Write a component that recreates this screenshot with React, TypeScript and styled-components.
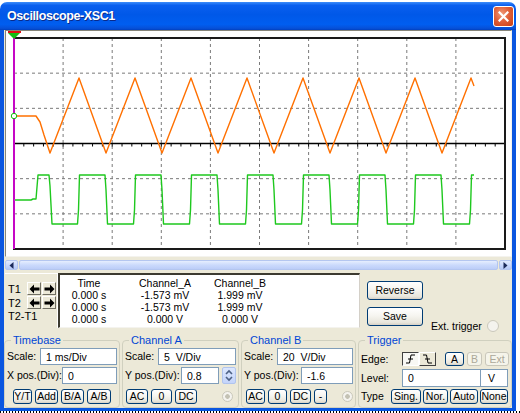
import React from 'react';
import styled, { createGlobalStyle } from 'styled-components';

const GlobalStyle = createGlobalStyle`
  html, body {
    margin: 0;
    padding: 0;
    background: #fff;
  }
  body {
    font-family: "Liberation Sans", Arial, sans-serif;
    font-size: 10.5px;
    color: #000;
  }
`;

const FONT = `"Liberation Sans", Arial, sans-serif`;

// plot area in page pixels
const PLOT = { x: 14, y: 38, w: 491, h: 211 };

const Window = styled.div`
  width: 516px;
  margin-top: 2px;
  display: flex;
  flex-direction: column;
`;

const TitleBar = styled.div`
  height: 28px;
  box-sizing: border-box;
  padding: 0 2px 0 7px;
  border-radius: 7px 7px 0 0;
  display: flex;
  align-items: center;
  justify-content: space-between;
  background: linear-gradient(180deg, #3d8dfa 0%, #0a5fef 12%, #0058e8 45%, #005ef0 80%, #0650d8 94%, #0040c0 100%);
`;

const TitleText = styled.span`
  color: #fff;
  font-family: ${FONT};
  font-weight: bold;
  font-size: 12.5px;
  letter-spacing: -0.4px;
  text-shadow: 1px 1px 0 #0a2a8a;
`;

const CloseButton = styled.div`
  width: 21px;
  height: 21px;
  box-sizing: border-box;
  border: 1px solid #fff;
  border-radius: 3px;
  display: flex;
  align-items: center;
  justify-content: center;
  background: radial-gradient(circle at 40% 35%, #f09a78 0%, #e0603a 45%, #c93d12 100%);
`;

const Client = styled.div`
  background: #ece9d8;
  border-left: 4px solid #0a56e0;
  border-right: 4px solid #0a56e0;
  border-bottom: 3px solid #0a56e0;
  display: flex;
  flex-direction: column;
`;

const DottedEdge = styled.div`
  height: 2px;
  width: 520px;
  background: repeating-linear-gradient(90deg, #000 0 1px, #fff 1px 3px);
`;

const Screen = styled.div`
  margin-left: 1px;
  width: 507px;
  height: 227px;
  box-sizing: border-box;
  border: 1px solid #86857a;
  border-right-color: #f4f3ee;
  border-bottom-color: #f4f3ee;
  background: #fff;
`;

const Canvas = styled.svg`
  display: block;
`;

const ScrollBar = styled.div`
  margin: 3px 0 0 1px;
  width: 507px;
  height: 10px;
  display: flex;
`;

const ScrollArrow = styled.div`
  width: 13px;
  box-sizing: border-box;
  border: 1px solid #b4c6f0;
  border-radius: 2px;
  background: linear-gradient(180deg, #e2ebfe 0%, #c6d6fc 60%, #b6c9f6 100%);
  display: flex;
  align-items: center;
  justify-content: center;
`;

const ScrollThumb = styled.div`
  flex: 1;
  margin: 0 1px;
  box-sizing: border-box;
  border: 1px solid #b4c6f0;
  border-radius: 2px;
  background: linear-gradient(180deg, #e6eefe 0%, #cbdafc 50%, #bccdf8 100%);
`;

const MiddleRow = styled.div`
  margin-top: 3px;
  height: 56px;
  display: flex;
  align-items: flex-start;
`;

const CursorPanel = styled.div`
  margin-left: 1px;
  width: 53px;
  height: 55px;
  box-sizing: border-box;
  border-top: 1px solid #fff;
  border-right: 1px solid #fff;
  padding: 8px 0 0 3px;
  display: grid;
  grid-template-columns: 19px auto;
  grid-template-rows: 13px 13px 12px;
  row-gap: 1px;
  align-items: center;
`;

const CursorLabel = styled.span`
  font-size: 11px;
  line-height: 12px;
`;

const WideLabel = styled(CursorLabel)`
  grid-column: 1 / span 2;
`;

const ArrowPair = styled.div`
  display: flex;
  gap: 1px;
`;

const ArrowButton = styled.div`
  width: 14px;
  height: 13px;
  box-sizing: border-box;
  border: 1px solid;
  border-color: #fff #716f64 #716f64 #fff;
  background: #ece9d8;
  display: flex;
  align-items: center;
  justify-content: center;
`;

const Readout = styled.div`
  width: 302px;
  height: 55px;
  box-sizing: border-box;
  background: #fff;
  border-top: 2px solid #3c3a30;
  border-left: 2px solid #3c3a30;
  border-right: 1px solid #d4d0c8;
  border-bottom: 1px solid #f4f3ee;
  padding-top: 2px;
  display: grid;
  grid-template-columns: 58px 94px 56px;
  grid-auto-rows: 12px;
  justify-items: center;
`;

const ReadoutCell = styled.span`
  font-size: 10.5px;
  line-height: 12px;
  white-space: nowrap;
`;

const ButtonColumn = styled.div`
  margin-left: 7px;
  padding-top: 8px;
  display: flex;
  flex-direction: column;
  gap: 7px;
`;

const XpButton = styled.button<{ $w: number; $h: number; $off?: boolean }>`
  width: ${({ $w }) => $w}px;
  height: ${({ $h }) => $h}px;
  box-sizing: border-box;
  padding: 0;
  border: 1px solid ${({ $off }) => ($off ? '#c9c7ba' : '#003c74')};
  border-radius: 3px;
  background: ${({ $off }) =>
    $off ? '#f5f4ea' : 'linear-gradient(180deg, #ffffff 0%, #f6f5f0 45%, #e8e6dc 85%, #d6d0c5 100%)'};
  color: ${({ $off }) => ($off ? '#aca899' : '#000')};
  font-family: ${FONT};
  font-size: 10.5px;
  line-height: 1;
  white-space: nowrap;
  display: flex;
  align-items: center;
  justify-content: center;
`;

const ExtTrigger = styled.div`
  margin: 0 0 -3px 8px;
  align-self: flex-end;
  display: flex;
  align-items: center;
  gap: 5px;
  font-size: 10.5px;
`;

const Radio = styled.span<{ $size: number; $dot?: boolean }>`
  width: ${({ $size }) => $size}px;
  height: ${({ $size }) => $size}px;
  box-sizing: border-box;
  border-radius: 50%;
  border: 1px solid #cac8bb;
  background: ${({ $dot }) =>
    $dot ? 'radial-gradient(circle, #c4c2b4 0 2px, #f4f3ee 2.6px)' : '#f4f3ee'};
  flex: none;
`;

const GroupsRow = styled.div`
  margin-top: 5px;
  display: flex;
  gap: 2px;
`;

const Group = styled.fieldset<{ $w: number }>`
  margin: 0;
  width: ${({ $w }) => $w}px;
  height: 74px;
  min-width: 0;
  box-sizing: border-box;
  padding: 1px 2px 2px 2px;
  border: 1px solid #d0d0bf;
  border-radius: 4px;
`;

const GroupTitle = styled.legend`
  margin-left: 4px;
  padding: 0 2px;
  color: #0046d5;
  font-size: 11px;
  line-height: 13px;
`;

const Row = styled.div<{ $top?: number; $h?: number; $pad?: number; $align?: string }>`
  margin-top: ${({ $top }) => $top ?? 0}px;
  height: ${({ $h }) => $h ?? 17}px;
  padding-left: ${({ $pad }) => $pad ?? 0}px;
  display: flex;
  align-items: ${({ $align }) => $align ?? 'center'};
  justify-content: space-between;
`;

const Cluster = styled.div<{ $gap: number }>`
  display: flex;
  align-items: center;
  gap: ${({ $gap }) => $gap}px;
`;

const Label = styled.span<{ $w?: number }>`
  font-size: 10.5px;
  line-height: 13px;
  white-space: nowrap;
  width: ${({ $w }) => ($w ? `${$w}px` : 'auto')};
  flex: none;
`;

const TextBox = styled.input<{ $w: number; $h?: number }>`
  width: ${({ $w }) => $w}px;
  height: ${({ $h }) => $h ?? 17}px;
  box-sizing: border-box;
  margin: 0;
  padding: 0 0 0 5px;
  border: 1px solid #7f9db9;
  background: #fff;
  font-family: ${FONT};
  font-size: 10.5px;
  color: #000;
  outline: none;
`;

const UnitBox = styled.div`
  width: 27px;
  height: 18px;
  box-sizing: border-box;
  border: 1px solid #7f9db9;
  border-left: none;
  padding-left: 7px;
  background: #fff;
  font-size: 10.5px;
  line-height: 16px;
`;

const Spinner = styled.div`
  width: 14px;
  height: 17px;
  box-sizing: border-box;
  border: 1px solid #b0c4ee;
  border-radius: 2px;
  background: linear-gradient(180deg, #dce7fe 0%, #c4d4fa 100%);
  display: flex;
`;

const EdgeButton = styled.div<{ $pressed?: boolean }>`
  width: 17px;
  height: 14px;
  box-sizing: border-box;
  border: 1px solid;
  border-color: ${({ $pressed }) => ($pressed ? '#404040 #fff #fff #404040' : '#fff #404040 #404040 #fff')};
  background: ${({ $pressed }) => ($pressed ? '#f8f8f4' : '#ece9d8')};
  display: flex;
  align-items: center;
  justify-content: center;
`;

const EdgePair = styled.div`
  display: flex;
  margin-right: 6px;
`;

const readout = [
  ['Time', 'Channel_A', 'Channel_B'],
  ['0.000 s', '-1.573 mV', '1.999 mV'],
  ['0.000 s', '-1.573 mV', '1.999 mV'],
  ['0.000 s', '0.000 V', '0.000 V'],
];

const vLines = Array.from({ length: 9 }, (_, i) => PLOT.x + (PLOT.w / 10) * (i + 1));
const hLines = Array.from({ length: 5 }, (_, i) => PLOT.y + (PLOT.h / 6) * (i + 1));
const axisY = hLines[2];
const ticks = Array.from({ length: 49 }, (_, i) => PLOT.x + (PLOT.w / 50) * (i + 1));

const PERIOD = 56;

// channel A: triangle wave
const triangle = (() => {
  const pts: number[][] = [[14, 116], [36, 116], [40, 122], [44, 135], [50, 153]];
  for (let k = 0; k < 8; k++) {
    pts.push([79 + PERIOD * k, 78]);
    if (k < 7) pts.push([106 + PERIOD * k, 153]);
  }
  pts.push([474, 86]);
  return pts.map((p) => p.join(',')).join(' ');
})();

// channel B: square wave
const square = (() => {
  const pts: number[][] = [[14, 200], [31, 200], [33, 199], [36, 199], [37, 187], [38, 175], [49, 175], [50, 186], [52, 224]];
  for (let k = 0; k < 8; k++) {
    const r = 77.5 + PERIOD * k;
    pts.push([r, 224], [r + 1, 210], [r + 2, 175]);
    if (k < 7) {
      const f = 105 + PERIOD * k;
      pts.push([f, 175], [f + 1, 190], [f + 2.5, 224]);
    }
  }
  pts.push([474, 175]);
  return pts.map((p) => p.join(',')).join(' ');
})();

const ScopeScreen: React.FC = () => (
  <Screen>
    <Canvas width={505} height={225} viewBox="6 31 505 225">
      {vLines.map((x) => (
        <line key={`v${x}`} x1={x} y1={PLOT.y} x2={x} y2={PLOT.y + PLOT.h} stroke="#7a7a7a" strokeDasharray="3 3" />
      ))}
      {hLines.map((y, i) =>
        i === 2 ? null : (
          <line key={`h${y}`} x1={PLOT.x} y1={y} x2={PLOT.x + PLOT.w} y2={y} stroke="#7a7a7a" strokeDasharray="3 3" />
        )
      )}
      <line x1={PLOT.x} y1={axisY} x2={PLOT.x + PLOT.w} y2={axisY} stroke="#000" strokeWidth={1.6} />
      {ticks.map((x) => (
        <line key={`t${x}`} x1={x} y1={axisY} x2={x} y2={axisY + 3} stroke="#000" strokeWidth={1} />
      ))}
      <rect x={PLOT.x} y={PLOT.y} width={PLOT.w} height={PLOT.h} fill="none" stroke="#1a1a1a" strokeWidth={2} />
      <polyline points={triangle} fill="none" stroke="#ff7000" strokeWidth={1.4} strokeLinejoin="round" />
      <polyline points={square} fill="none" stroke="#1ec81e" strokeWidth={1.4} strokeLinejoin="round" />
      <line x1={14} y1={33} x2={14} y2={PLOT.y + PLOT.h} stroke="#ff00ff" strokeWidth={1.5} />
      <rect x={8} y={31} width={13} height={2} fill="#e01010" />
      <polygon points="8,33 20,33 14,39" fill="#10c010" />
      <circle cx={14} cy={116} r={2.7} fill="#fff" stroke="#10c010" strokeWidth={1} />
    </Canvas>
  </Screen>
);

const ArrowIcon: React.FC<{ dir: 'left' | 'right' }> = ({ dir }) => (
  <svg width="11" height="10" viewBox="0 0 11 10">
    <path
      d="M0.5 5 L5 0.5 V3.5 H10.5 V6.5 H5 V9.5 Z"
      fill="#000"
      transform={dir === 'right' ? 'translate(11 0) scale(-1 1)' : undefined}
    />
  </svg>
);

const CursorControls: React.FC = () => (
  <CursorPanel>
    <CursorLabel>T1</CursorLabel>
    <ArrowPair>
      <ArrowButton><ArrowIcon dir="left" /></ArrowButton>
      <ArrowButton><ArrowIcon dir="right" /></ArrowButton>
    </ArrowPair>
    <CursorLabel>T2</CursorLabel>
    <ArrowPair>
      <ArrowButton><ArrowIcon dir="left" /></ArrowButton>
      <ArrowButton><ArrowIcon dir="right" /></ArrowButton>
    </ArrowPair>
    <WideLabel>T2-T1</WideLabel>
  </CursorPanel>
);

const SpinIcon: React.FC = () => (
  <svg width="12" height="15" viewBox="0 0 12 15">
    <path d="M3 6 L6 3 L9 6" fill="none" stroke="#4d6185" strokeWidth={1.6} />
    <path d="M3 9 L6 12 L9 9" fill="none" stroke="#4d6185" strokeWidth={1.6} />
  </svg>
);

const EdgeIcon: React.FC<{ rising: boolean }> = ({ rising }) => (
  <svg width="13" height="10" viewBox="0 0 13 10">
    <path
      d={rising ? 'M2 9 H5.5 L7 1 H11 M4 5 H9' : 'M2 1 H5.5 L7 9 H11 M4 5 H9'}
      fill="none"
      stroke="#000"
      strokeWidth={1}
    />
  </svg>
);

const Timebase: React.FC = () => (
  <Group $w={116}>
    <GroupTitle>Timebase</GroupTitle>
    <Row>
      <Label>Scale:</Label>
      <TextBox $w={77} readOnly value="1 ms/Div" />
    </Row>
    <Row $top={2}>
      <Label>X pos.(Div):</Label>
      <TextBox $w={55} readOnly value="0" />
    </Row>
    <Row $top={5} $h={15} $pad={6}>
      <Cluster $gap={3}>
        <XpButton $w={19} $h={15}>Y/T</XpButton>
        <XpButton $w={23} $h={15}>Add</XpButton>
        <XpButton $w={23} $h={15}>B/A</XpButton>
        <XpButton $w={24} $h={15}>A/B</XpButton>
      </Cluster>
    </Row>
  </Group>
);

const ChannelA: React.FC = () => (
  <Group $w={117}>
    <GroupTitle>Channel A</GroupTitle>
    <Row>
      <Label>Scale:</Label>
      <TextBox $w={78} readOnly value="5  V/Div" />
    </Row>
    <Row $top={2}>
      <Label>Y pos.(Div):</Label>
      <Cluster $gap={3}>
        <TextBox $w={38} readOnly value="0.8" />
        <Spinner><SpinIcon /></Spinner>
      </Cluster>
    </Row>
    <Row $top={5} $h={15} $pad={1}>
      <Cluster $gap={3}>
        <XpButton $w={22} $h={15}>AC</XpButton>
        <XpButton $w={21} $h={15}>0</XpButton>
        <XpButton $w={22} $h={15}>DC</XpButton>
      </Cluster>
      <Cluster $gap={0} style={{ marginRight: 3 }}>
        <Radio $size={11} $dot />
      </Cluster>
    </Row>
  </Group>
);

const ChannelB: React.FC = () => (
  <Group $w={115}>
    <GroupTitle>Channel B</GroupTitle>
    <Row>
      <Label>Scale:</Label>
      <TextBox $w={76} readOnly value="20  V/Div" />
    </Row>
    <Row $top={2}>
      <Label>Y pos.(Div):</Label>
      <TextBox $w={52} readOnly value="-1.6" />
    </Row>
    <Row $top={5} $h={15} $pad={2}>
      <Cluster $gap={3}>
        <XpButton $w={19} $h={15}>AC</XpButton>
        <XpButton $w={19} $h={15}>0</XpButton>
        <XpButton $w={21} $h={15}>DC</XpButton>
        <XpButton $w={13} $h={15}>-</XpButton>
      </Cluster>
      <Radio $size={11} $dot />
    </Row>
  </Group>
);

const Trigger: React.FC = () => (
  <Group $w={154}>
    <GroupTitle>Trigger</GroupTitle>
    <Row $h={18} $align="flex-end">
      <Label $w={41}>Edge:</Label>
      <Cluster $gap={3} style={{ marginRight: 1 }}>
        <EdgePair>
          <EdgeButton $pressed><EdgeIcon rising /></EdgeButton>
          <EdgeButton><EdgeIcon rising={false} /></EdgeButton>
        </EdgePair>
        <XpButton $w={19} $h={14}>A</XpButton>
        <XpButton $w={15} $h={14} $off>B</XpButton>
        <XpButton $w={24} $h={14} $off>Ext</XpButton>
      </Cluster>
    </Row>
    <Row $top={3} $h={18}>
      <Label $w={41}>Level:</Label>
      <Cluster $gap={0} style={{ marginRight: 1 }}>
        <TextBox $w={79} $h={18} readOnly value="0" />
        <UnitBox>V</UnitBox>
      </Cluster>
    </Row>
    <Row $top={2} $h={15}>
      <Label $w={30}>Type</Label>
      <Cluster $gap={2} style={{ marginRight: 1 }}>
        <XpButton $w={30} $h={15}>Sing.</XpButton>
        <XpButton $w={25} $h={15}>Nor.</XpButton>
        <XpButton $w={28} $h={15}>Auto</XpButton>
        <XpButton $w={28} $h={15}>None</XpButton>
      </Cluster>
    </Row>
  </Group>
);

const App: React.FC = () => (
  <>
    <GlobalStyle />
    <Window>
      <TitleBar>
        <TitleText>Oscilloscope-XSC1</TitleText>
        <CloseButton>
          <svg width="11" height="11" viewBox="0 0 11 11">
            <path d="M1.5 1.5 L9.5 9.5 M9.5 1.5 L1.5 9.5" stroke="#fff" strokeWidth={2.2} strokeLinecap="square" />
          </svg>
        </CloseButton>
      </TitleBar>
      <Client>
        <ScopeScreen />
        <ScrollBar>
          <ScrollArrow>
            <svg width="5" height="7" viewBox="0 0 5 7"><polygon points="4.5,0 0.5,3.5 4.5,7" fill="#1c2a5a" /></svg>
          </ScrollArrow>
          <ScrollThumb />
          <ScrollArrow>
            <svg width="5" height="7" viewBox="0 0 5 7"><polygon points="0.5,0 4.5,3.5 0.5,7" fill="#1c2a5a" /></svg>
          </ScrollArrow>
        </ScrollBar>
        <MiddleRow>
          <CursorControls />
          <Readout>
            {readout.map((row, r) =>
              row.map((cell, c) => <ReadoutCell key={`${r}-${c}`}>{cell}</ReadoutCell>)
            )}
          </Readout>
          <ButtonColumn>
            <XpButton $w={56} $h={19}>Reverse</XpButton>
            <XpButton $w={56} $h={19}>Save</XpButton>
          </ButtonColumn>
          <ExtTrigger>
            Ext. trigger
            <Radio $size={12} />
          </ExtTrigger>
        </MiddleRow>
        <GroupsRow>
          <Timebase />
          <ChannelA />
          <ChannelB />
          <Trigger />
        </GroupsRow>
      </Client>
      <DottedEdge />
    </Window>
  </>
);

export default App;
